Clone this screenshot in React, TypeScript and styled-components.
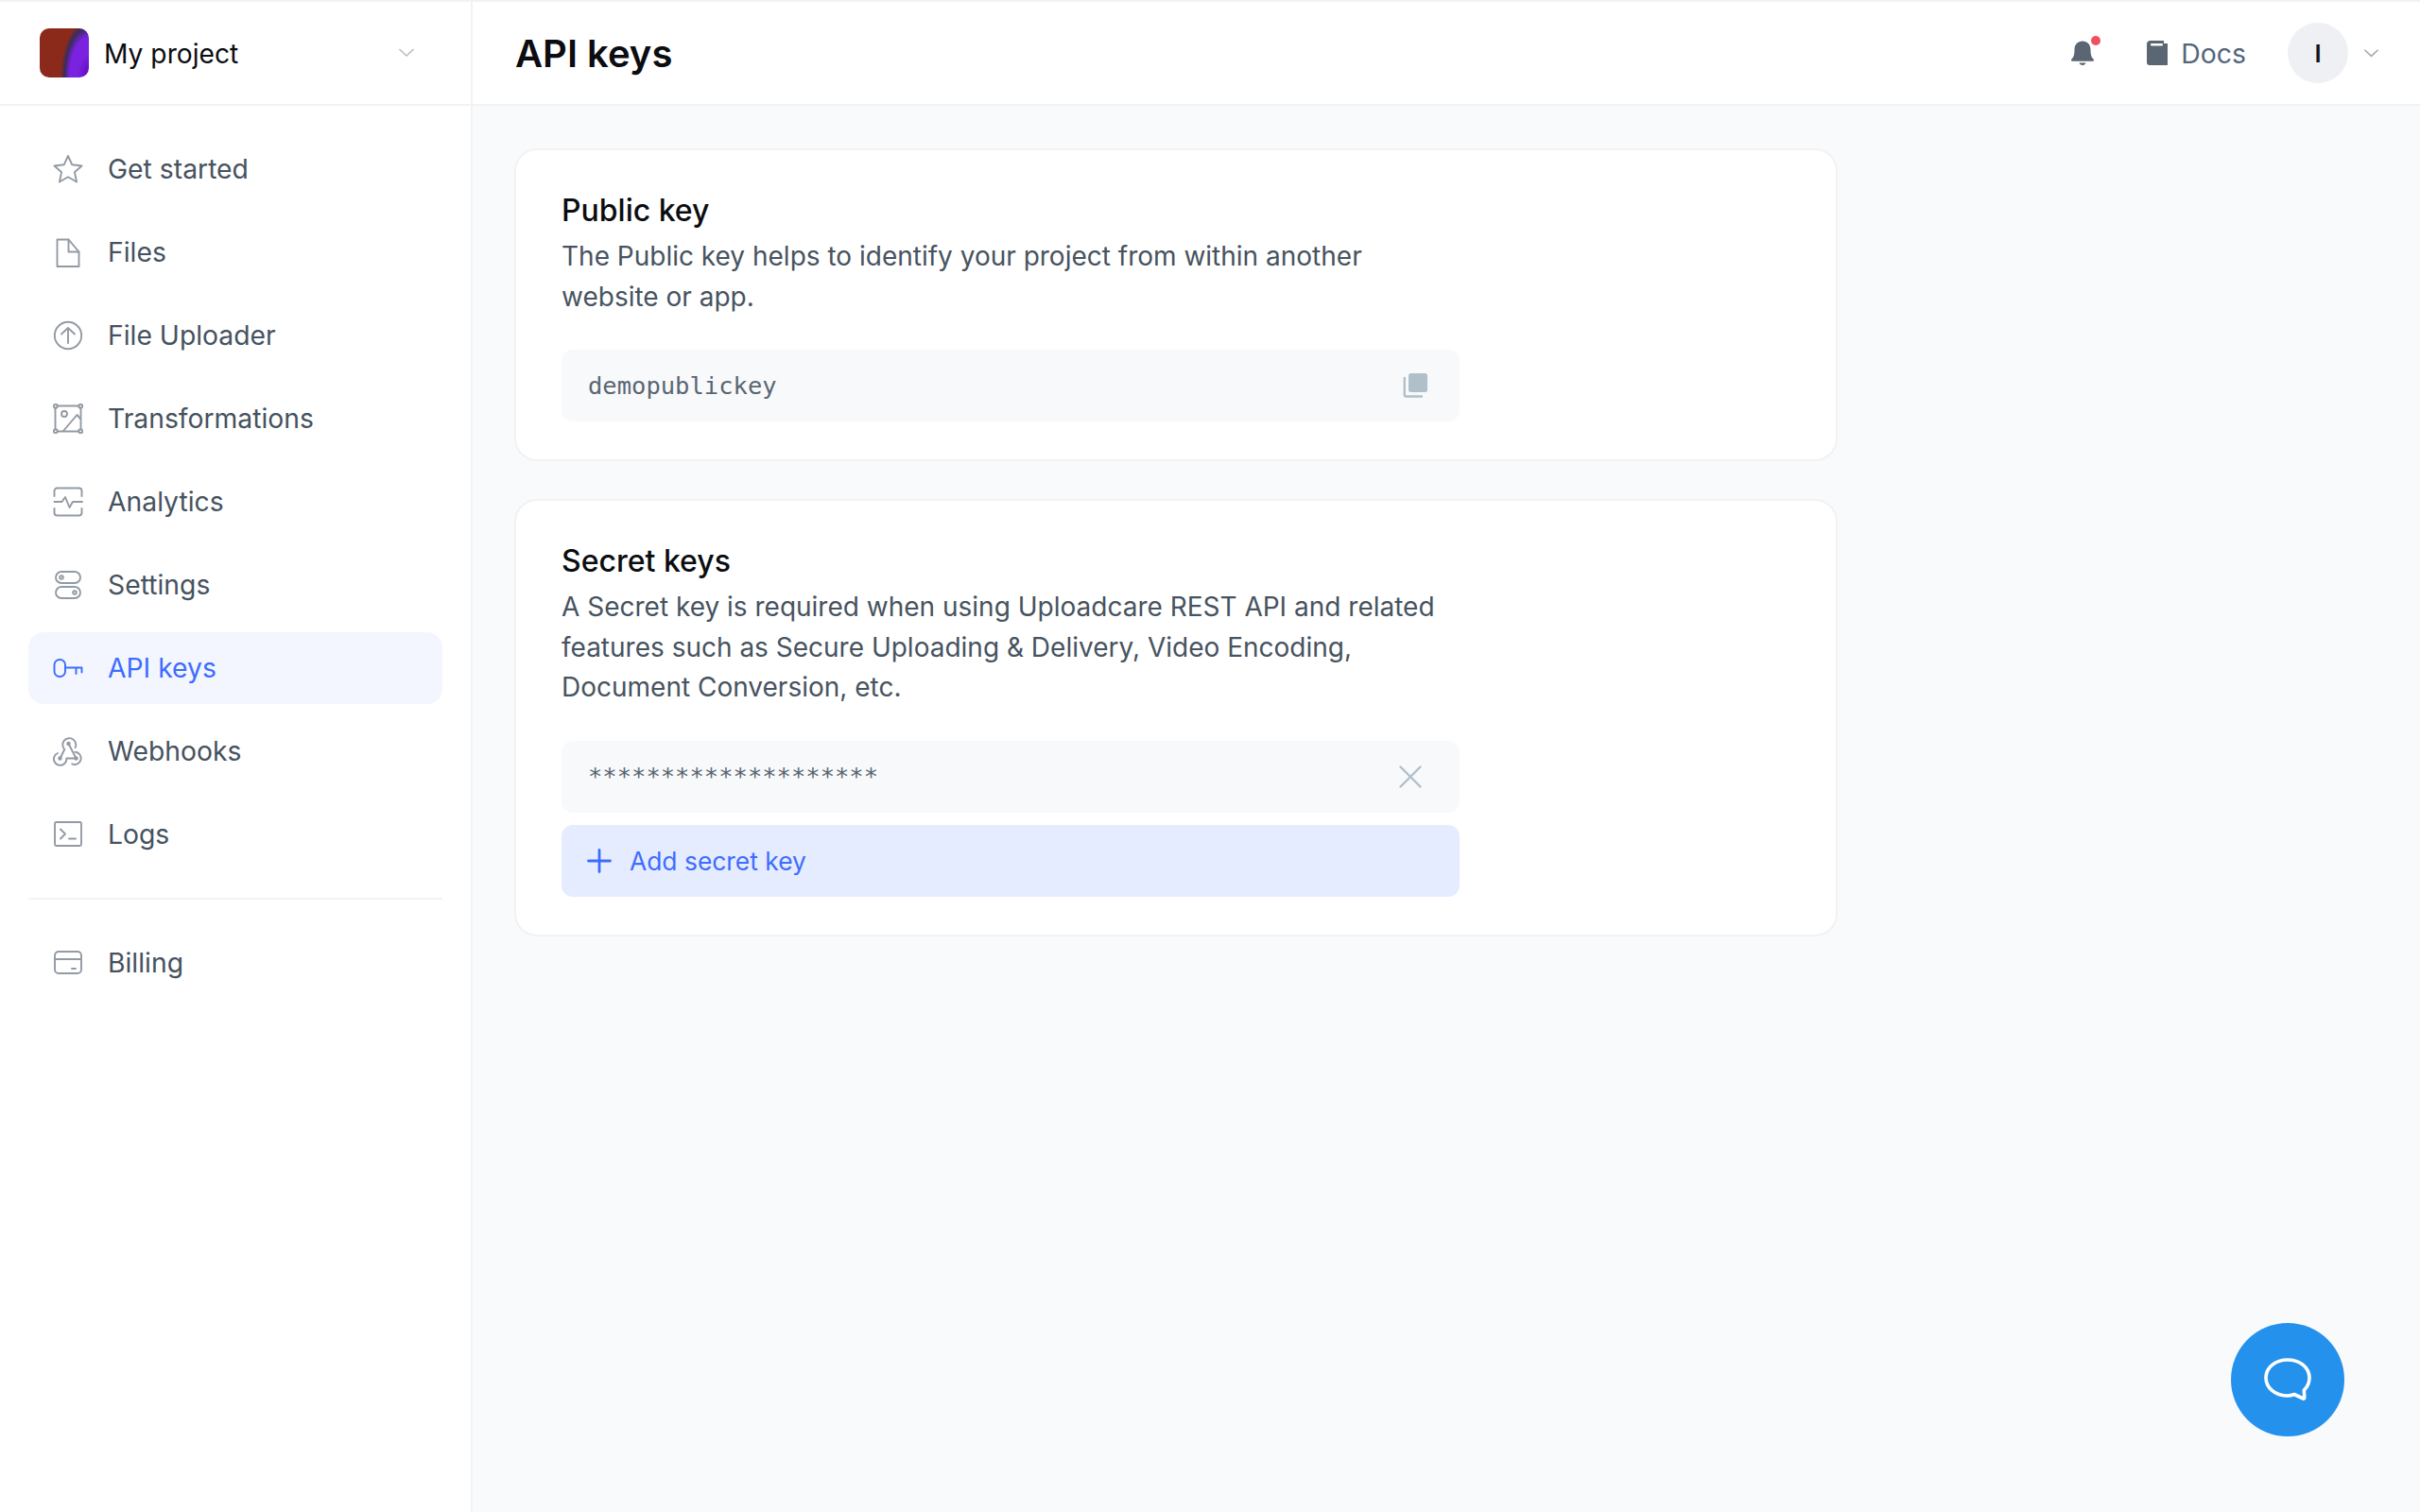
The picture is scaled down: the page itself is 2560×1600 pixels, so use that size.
import { ReactNode } from 'react';
import { createGlobalStyle, styled } from 'styled-components';

const GlobalStyle = createGlobalStyle`
  html, body {
    margin: 0;
    padding: 0;
    height: 100%;
    background: #f9fafc;
    font-family: Inter, "Liberation Sans", sans-serif;
  }
  * { box-sizing: border-box; }
`;

const IconBase = ({ children, size = 32 }: { children: ReactNode; size?: number }) => (
  <svg width={size} height={size} viewBox="0 0 32 32" fill="none" stroke="currentColor" strokeWidth="1.9" strokeLinecap="round" strokeLinejoin="round">
    {children}
  </svg>
);

const StarIcon = () => (
  <IconBase>
    <path d="M16 2l4.300 9.300 10.200 1.200-7.600 6.800 2.200 10.200L16 24.300 6.900 29.500l2.200-10.200-7.600-6.800 10.200-1.200z" />
  </IconBase>
);
const FileIcon = () => (
  <IconBase>
    <path d="M4.500 2.500h12l11 13v15.500h-23z" />
    <path d="M16.500 2.500v13h11" />
  </IconBase>
);
const UploadIcon = () => (
  <IconBase>
    <circle cx="16" cy="16" r="14.200" />
    <path d="M16 24V8M9 14.500L16 8l7 6.500" />
  </IconBase>
);
const TransformIcon = () => (
  <IconBase>
    <path d="M4.500 2.500h23M4.500 29.500h23M2.500 4.500v23M29.500 4.500v23" />
    <circle cx="2.800" cy="2.800" r="2" />
    <circle cx="29.200" cy="2.800" r="2" />
    <circle cx="2.800" cy="29.200" r="2" />
    <circle cx="29.200" cy="29.200" r="2" />
    <circle cx="12" cy="11" r="3" />
    <path d="M11 29l14.500-17L29 16" />
  </IconBase>
);
const AnalyticsIcon = () => (
  <IconBase>
    <path d="M1.500 10V4.500a3 3 0 0 1 3-3h23a3 3 0 0 1 3 3V10M1.500 23v4.500a3 3 0 0 0 3 3h23a3 3 0 0 0 3-3V23" />
    <path d="M1.500 16h8l3.500-5 4.500 11 3.500-6h10" />
  </IconBase>
);
const SettingsIcon = () => (
  <IconBase>
    <rect x="3" y="2" width="26" height="12" rx="6" />
    <rect x="3" y="18" width="26" height="12" rx="6" />
    <circle cx="9" cy="8" r="1.800" />
    <circle cx="23" cy="24" r="1.800" />
  </IconBase>
);
const KeyIcon = () => (
  <IconBase>
    <rect x="1.500" y="7" width="11.500" height="18" rx="5.500" />
    <path d="M13 15.500h17.500v5M24.500 15.500v6.500" />
  </IconBase>
);
const WebhookIcon = () => (
  <IconBase>
    <path d="M7.500 23.500l4.800-9.500a7 7 0 1 1 11.300-1.800" />
    <path d="M16.500 8l8 15.500" />
    <path d="M23.500 16.800a6.600 6.600 0 1 1-3.300 12.500" />
    <path d="M5 18a6.700 6.700 0 1 0 9.300 5.500h10.200" />
    <circle cx="16.500" cy="8" r="1.300" fill="currentColor" />
    <circle cx="7.500" cy="23.500" r="1.300" fill="currentColor" />
    <circle cx="24.500" cy="23.500" r="1.300" fill="currentColor" />
  </IconBase>
);
const LogsIcon = () => (
  <IconBase>
    <rect x="2" y="3" width="28" height="25" rx="1.500" />
    <path d="M8 10.500l5 5-5 5M17 20.500h7" />
  </IconBase>
);
const BillingIcon = () => (
  <IconBase>
    <rect x="2" y="4" width="28" height="23" rx="4" />
    <path d="M2 12h28M20 22h4" />
  </IconBase>
);

const navItems = [
  { label: 'Get started', icon: <StarIcon /> },
  { label: 'Files', icon: <FileIcon /> },
  { label: 'File Uploader', icon: <UploadIcon /> },
  { label: 'Transformations', icon: <TransformIcon /> },
  { label: 'Analytics', icon: <AnalyticsIcon /> },
  { label: 'Settings', icon: <SettingsIcon /> },
  { label: 'API keys', icon: <KeyIcon />, active: true },
  { label: 'Webhooks', icon: <WebhookIcon /> },
  { label: 'Logs', icon: <LogsIcon /> },
];

const Chevron = ({ width }: { width: number }) => (
  <svg width={width} height={width} viewBox="0 0 16 16" fill="none" stroke="currentColor" strokeWidth="1.700" strokeLinecap="round" strokeLinejoin="round">
    <path d="M1 4.500l7 6.500 7-6.500" />
  </svg>
);

const App = () => {
  return (
    <S.Page>
      <GlobalStyle />
      <S.Sidebar>
        <S.ProjectBar>
          <S.ProjectLogo />
          <S.ProjectName>My project</S.ProjectName>
          <S.ProjectChevron>
            <Chevron width={16} />
          </S.ProjectChevron>
        </S.ProjectBar>
        <S.Nav>
          {navItems.map((item) => (
            <S.NavItem key={item.label} $active={item.active}>
              <S.NavIcon $active={item.active}>{item.icon}</S.NavIcon>
              {item.label}
            </S.NavItem>
          ))}
          <S.NavDivider />
          <S.NavItem>
            <S.NavIcon>
              <BillingIcon />
            </S.NavIcon>
            Billing
          </S.NavItem>
        </S.Nav>
      </S.Sidebar>
      <S.Content>
        <S.Header>
          <S.Title>API keys</S.Title>
          <S.HeaderActions>
            <S.Bell>
              <svg width="26" height="28" viewBox="0 0 26 28" fill="#5a6672">
                <path d="M13 1.500c-5 0-8.500 3.800-8.500 8.700 0 5.500-.8 8-2.500 9.800-.8.800-1.200 1.500-1 2 .1.500.6.800 1.400.800h21.200c.8 0 1.300-.3 1.400-.8.200-.5-.2-1.200-1-2-1.700-1.800-2.500-4.300-2.500-9.800 0-4.900-3.500-8.700-8.500-8.700z" />
                <path d="M9.500 24.500h7c-.3 1.500-1.700 2.500-3.500 2.500s-3.200-1-3.500-2.500z" />
              </svg>
              <S.BellDot />
            </S.Bell>
            <S.DocsLink>
              <svg width="22" height="26" viewBox="0 0 22 26">
                <path fill="#5a6672" d="M4 0h14v3h4v23H3a3 3 0 0 1-3-3V4a4 4 0 0 1 4-4z" />
                <rect x="4" y="3" width="13" height="2.500" rx="1" fill="#fff" />
              </svg>
              Docs
            </S.DocsLink>
            <S.Avatar>I</S.Avatar>
            <S.UserChevron>
              <Chevron width={15} />
            </S.UserChevron>
          </S.HeaderActions>
        </S.Header>
        <S.Main>
          <S.Card>
            <S.CardTitle>Public key</S.CardTitle>
            <S.CardText>The Public key helps to identify your project from within another website or app.</S.CardText>
            <S.KeyField>
              <S.KeyValue>demopublickey</S.KeyValue>
              <S.CopyButton>
                <svg width="26" height="26" viewBox="0 0 26 26" fill="#b0c0cb">
                  <rect x="6" y="0" width="20" height="20" rx="2.500" />
                  <path d="M1.800 5v17.500a2 2 0 0 0 2 2H20" fill="none" stroke="#b0c0cb" strokeWidth="2.400" strokeLinecap="round" />
                </svg>
              </S.CopyButton>
            </S.KeyField>
          </S.Card>
          <S.Card>
            <S.CardTitle>Secret keys</S.CardTitle>
            <S.CardText>
              A Secret key is required when using Uploadcare REST API and related features such as Secure Uploading &amp; Delivery, Video Encoding, Document Conversion, etc.
            </S.CardText>
            <S.KeyField>
              <S.KeyValue $masked>********************</S.KeyValue>
              <S.RemoveButton>
                <svg width="24" height="24" viewBox="0 0 24 24" fill="none" stroke="#b0c0cb" strokeWidth="2.400" strokeLinecap="round">
                  <path d="M1.500 1.500l21 21M22.500 1.500l-21 21" />
                </svg>
              </S.RemoveButton>
            </S.KeyField>
            <S.AddButton>
              <svg width="26" height="26" viewBox="0 0 26 26" fill="none" stroke="#3d6cff" strokeWidth="2.800" strokeLinecap="round">
                <path d="M13 1.500v23M1.500 13h23" />
              </svg>
              Add secret key
            </S.AddButton>
          </S.Card>
        </S.Main>
      </S.Content>
      <S.ChatButton>
        <svg width="50" height="46" viewBox="0 0 50 46" fill="none" stroke="#fff" strokeWidth="3.600" strokeLinejoin="round">
          <path d="M25 2C12 2 2 10 2 21c0 10.500 10 19 22 19 3 0 5.500-.4 8-1.500l9.500 4.500c.8.300 1.300-.2 1.300-.9l-.5-8c3.800-3.500 5.700-8.600 5.700-13.100C48 10 38 2 25 2z" />
        </svg>
      </S.ChatButton>
    </S.Page>
  );
};

const S = {
  Page: styled.div`
    display: flex;
    overflow: hidden;

    width: 100%;
    height: 100vh;
    border-top: 2px solid #f1f2f4;

    background: #f9fafc;
  `,

  Sidebar: styled.aside`
    display: flex;
    flex-direction: column;
    flex-shrink: 0;

    width: 500px;
    border-right: 2px solid #f1f2f4;

    background: #fff;
  `,

  ProjectBar: styled.div`
    display: flex;
    align-items: center;

    height: 110px;
    padding: 0 60px 0 42px;
    border-bottom: 2px solid #f1f2f4;
  `,

  ProjectLogo: styled.div`
    flex-shrink: 0;

    width: 52px;
    height: 52px;
    border-radius: 10px;

    background:
      radial-gradient(ellipse 30px 62px at 100% 100%, #5b08b8 0%, #7a22e0 40%, #7a22e0 68%, #3a2c5c 86%, rgba(58, 44, 92, 0) 100%),
      #8b2a1b;
  `,

  ProjectName: styled.span`
    flex: 1;

    margin-top: 2px;
    margin-left: 16px;

    color: #0b0d10;
    font-size: 28.200px;
  `,

  ProjectChevron: styled.span`
    display: flex;

    color: #b9bec5;
  `,

  Nav: styled.nav`
    display: flex;
    flex-direction: column;
    gap: 12px;

    padding: 29px 30px 0;
  `,

  NavItem: styled.div<{ $active?: boolean }>`
    display: flex;
    gap: 26px;
    align-items: center;

    height: 76px;
    padding: 0 24px 0 26px;
    border-radius: 16px;

    background: ${({ $active }) => ($active ? '#f3f6ff' : 'transparent')};

    color: ${({ $active }) => ($active ? '#3d6cff' : '#46525f')};
    font-size: 28.300px;
  `,

  NavIcon: styled.span<{ $active?: boolean }>`
    display: flex;
    flex-shrink: 0;
    justify-content: center;

    width: 32px;

    color: ${({ $active }) => ($active ? '#3d6cff' : '#929aa4')};
  `,

  NavDivider: styled.hr`
    width: 100%;
    height: 2px;
    margin: 17px 0 17px;
    border: none;

    background: #f1f2f4;
  `,

  Content: styled.div`
    display: flex;
    flex: 1;
    flex-direction: column;

    min-width: 0;
  `,

  Header: styled.header`
    display: flex;
    align-items: center;
    justify-content: space-between;

    height: 110px;
    padding: 0 44px 0 45px;
    border-bottom: 2px solid #f1f2f4;

    background: #fff;
  `,

  Title: styled.h1`
    margin: 0;

    color: #0b0d10;
    font-size: 40px;
    font-weight: 600;
  `,

  HeaderActions: styled.div`
    display: flex;
    align-items: center;
  `,

  Bell: styled.span`
    position: relative;

    display: flex;

    margin-right: 55px;
  `,

  BellDot: styled.span`
    position: absolute;
    top: -4px;
    right: -6px;

    width: 10px;
    height: 10px;
    border-radius: 50%;

    background: #f0505f;
  `,

  DocsLink: styled.span`
    display: flex;
    gap: 14px;
    align-items: center;

    margin-right: 44px;

    color: #53667a;
    font-size: 28.400px;
  `,

  Avatar: styled.span`
    display: flex;
    align-items: center;
    justify-content: center;

    width: 64px;
    height: 64px;
    border-radius: 50%;

    background: #eff0f4;

    color: #15151f;
    font-size: 26px;
    font-weight: 600;
  `,

  UserChevron: styled.span`
    display: flex;

    margin-left: 17px;

    color: #a6a9ae;
  `,

  Main: styled.main`
    display: flex;
    flex-direction: column;
    gap: 40px;
    align-items: flex-start;

    padding: 45px 0 0 44px;
  `,

  Card: styled.section`
    display: flex;
    flex-direction: column;

    width: 1400px;
    padding: 44px 48px 40px;
    border: 2px solid #f1f2f4;
    border-radius: 24px;

    background: #fff;
  `,

  CardTitle: styled.h2`
    margin: 0 0 7px;

    color: #0b0d10;
    font-size: 32px;
    font-weight: 500;
    line-height: 40px;
  `,

  CardText: styled.p`
    width: 950px;
    margin: 0 0 35px;

    color: #47535f;
    font-size: 28px;
    line-height: 42.500px;
  `,

  KeyField: styled.div`
    display: flex;
    align-items: center;
    justify-content: space-between;

    width: 950px;
    height: 76px;
    padding: 0 34px 0 28px;
    border-radius: 12px;

    background: #f8f9fb;
  `,

  KeyValue: styled.span<{ $masked?: boolean }>`
    margin-top: ${({ $masked }) => ($masked ? '-2px' : '0')};

    color: #5a6672;
    font-family: "DejaVu Sans Mono", monospace;
    font-size: 25.500px;
  `,

  CopyButton: styled.span`
    display: flex;
  `,

  RemoveButton: styled.span`
    display: flex;

    margin-right: 6px;
  `,

  AddButton: styled.div`
    display: flex;
    gap: 19px;
    align-items: center;

    width: 950px;
    height: 76px;
    margin-top: 13px;
    padding: 0 27px;
    border-radius: 12px;

    background: #e6ecff;

    color: #3d6cff;
    font-size: 26.400px;
  `,

  ChatButton: styled.div`
    position: fixed;
    right: 80px;
    bottom: 80px;

    display: flex;
    align-items: center;
    justify-content: center;

    width: 120px;
    height: 120px;
    border-radius: 50%;

    background: #2492ec;
  `,
};

export default App;
